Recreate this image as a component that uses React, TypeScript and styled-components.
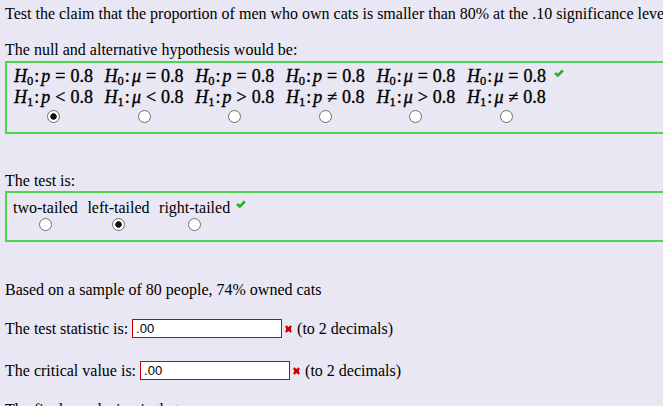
import styled, { createGlobalStyle } from "styled-components";

const GlobalStyle = createGlobalStyle`
  html, body {
    margin: 0;
    padding: 0;
    background: #e9e7f3;
    overflow: hidden;
  }
  body {
    font-family: "Liberation Serif", "Times New Roman", serif;
    font-size: 16px;
    color: #000;
  }
`;

const Page = styled.div`
  width: 820px;
  padding: 4px 5px 0;
`;

const Line = styled.p<{ $top?: number }>`
  margin: ${(p) => p.$top ?? 0}px 0 0;
  line-height: 19px;
  white-space: nowrap;
`;

const HypBox = styled.div`
  display: flex;
  gap: 11.6px;
  margin-top: 2px;
  border: 2px solid #4cd84c;
  padding: 3px 0 9px 7px;
`;

const HypCell = styled.div`
  width: 79px;
  display: flex;
  flex-direction: column;
  align-items: center;
`;

const MathLine = styled.div`
  font-size: 18px;
  line-height: 21px;
  white-space: nowrap;
  -webkit-text-stroke: 0.35px #000;
`;

const Var = styled.i`
  font-style: italic;
`;

const Sub = styled.sub`
  font-size: 12.5px;
  vertical-align: -3px;
  line-height: 0;
`;

const Colon = styled.span`
  margin: 0 2px 0 1px;
`;

const Rel = styled.span`
  margin: 0 5px;
`;

const TestBox = styled.div`
  display: flex;
  gap: 9.5px;
  margin-top: 1px;
  border: 2px solid #4cd84c;
  padding: 5px 0 9px 6px;
`;

const TestCell = styled.div`
  display: flex;
  flex-direction: column;
  align-items: center;
  line-height: 19px;
  white-space: nowrap;
`;

const Radio = styled.span<{ $checked?: boolean; $top?: number }>`
  display: block;
  box-sizing: border-box;
  width: 13px;
  height: 13px;
  margin-top: ${(p) => p.$top ?? 1}px;
  border-radius: 50%;
  border: 1px solid #6f6f6f;
  background: ${(p) =>
    p.$checked
      ? "radial-gradient(circle, #111 0 2.9px, #fff 3.5px)"
      : "#fff"};
`;

const CheckWrap = styled.span<{ $top: number; $left: number }>`
  display: block;
  align-self: flex-start;
  margin-top: ${(p) => p.$top}px;
  margin-left: ${(p) => p.$left}px;
  line-height: 0;
`;

const AnswerRow = styled.div<{ $top: number }>`
  display: flex;
  align-items: center;
  height: 22px;
  margin-top: ${(p) => p.$top}px;
  white-space: nowrap;
`;

const Label = styled.span`
  margin-right: 4px;
`;

const AnswerInput = styled.input`
  box-sizing: border-box;
  width: 150px;
  height: 19px;
  margin: 0;
  padding: 0 3px;
  border: 1px solid #cc0000;
  background: #fff;
  font-family: "Liberation Sans", Arial, sans-serif;
  font-size: 13px;
  color: #000;
  outline: none;
`;

const XWrap = styled.span`
  display: block;
  margin: 0 5px 0 3px;
  line-height: 0;
`;

function Check({ top, left }: { top: number; left: number }) {
  return (
    <CheckWrap $top={top} $left={left}>
      <svg width="10" height="8" viewBox="0 0 10 8">
        <path
          d="M1.2 4 L3.8 6.6 L8.8 1.3"
          fill="none"
          stroke="#22b022"
          strokeWidth="2.6"
          strokeLinejoin="round"
        />
      </svg>
    </CheckWrap>
  );
}

function XMark() {
  return (
    <XWrap>
      <svg width="7" height="8" viewBox="0 0 7 8">
        <path
          d="M0.8 1 L6.2 7 M6.2 1 L0.8 7"
          fill="none"
          stroke="#d00000"
          strokeWidth="2.2"
        />
        <rect x="1" y="1.8" width="5" height="4.4" fill="#d00000" />
      </svg>
    </XWrap>
  );
}

interface IHyp {
  v: string;
  rel: string;
  checked?: boolean;
}

const hyps: IHyp[] = [
  { v: "p", rel: "<", checked: true },
  { v: "μ", rel: "<" },
  { v: "p", rel: ">" },
  { v: "p", rel: "≠" },
  { v: "μ", rel: ">" },
  { v: "μ", rel: "≠" },
];

const tests = [
  { label: "two-tailed" },
  { label: "left-tailed", checked: true },
  { label: "right-tailed" },
];

function HypLine({ sub, v, rel }: { sub: string; v: string; rel: string }) {
  return (
    <MathLine>
      <Var>H</Var>
      <Sub>{sub}</Sub>
      <Colon>:</Colon>
      <Var>{v}</Var>
      <Rel>{rel}</Rel>
      0.8
    </MathLine>
  );
}

export default function App() {
  return (
    <>
      <GlobalStyle />
      <Page>
        <Line>
          Test the claim that the proportion of men who own cats is smaller
          than 80% at the .10 significance level.
        </Line>
        <Line $top={17}>The null and alternative hypothesis would be:</Line>
        <HypBox>
          {hyps.map((h, i) => (
            <HypCell key={i}>
              <HypLine sub="0" v={h.v} rel="=" />
              <HypLine sub="1" v={h.v} rel={h.rel} />
              <Radio $checked={h.checked} $top={1.5} />
            </HypCell>
          ))}
          <Check top={3} left={-4} />
        </HypBox>

        <Line $top={37}>The test is:</Line>
        <TestBox>
          {tests.map((t) => (
            <TestCell key={t.label}>
              {t.label}
              <Radio $checked={t.checked} />
            </TestCell>
          ))}
          <Check top={2} left={-3.5} />
        </TestBox>

        <Line $top={38}>Based on a sample of 80 people, 74% owned cats</Line>
        <AnswerRow $top={19}>
          <Label>The test statistic is:</Label>
          <AnswerInput defaultValue=".00" />
          <XMark />
          (to 2 decimals)
        </AnswerRow>
        <AnswerRow $top={20}>
          <Label>The critical value is:</Label>
          <AnswerInput defaultValue=".00" />
          <XMark />
          (to 2 decimals)
        </AnswerRow>
        <Line $top={18}>The final conclusion is that</Line>
      </Page>
    </>
  );
}
